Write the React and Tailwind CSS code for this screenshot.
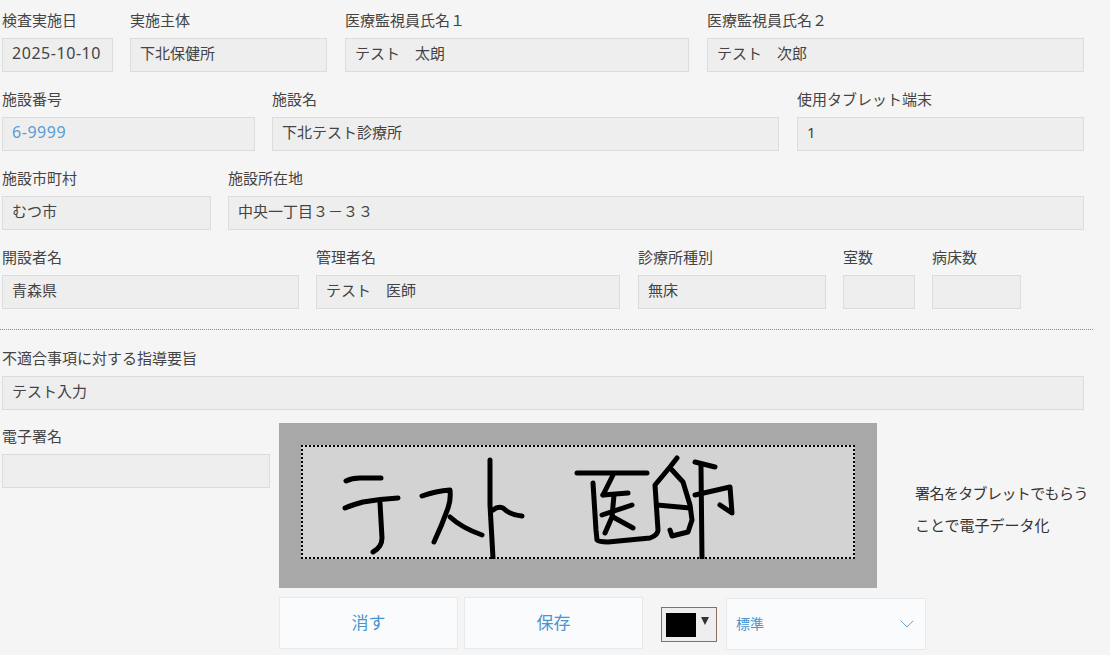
import React from 'react';
import { ChevronDown } from 'lucide-react';

const Field = ({ label, value, className = '', valueClass = 'text-[#444] text-[15px]' }) => (
    <div className={`shrink-0 ${className}`}>
        <div className="h-5 mb-[7px] text-[15px] leading-[18px] text-[#444]">{label}</div>
        <div className={`h-[34px] px-[9px] border border-[#dcdcdc] bg-[#eeeeee] leading-[28px] whitespace-nowrap ${valueClass}`}>
            {value}
        </div>
    </div>
);

// handwritten signature strokes, in page coordinates
const strokes = [
    'M346 481 Q352 478 360 478 L381 478',
    'M345 508 Q352 505 363 502 Q380 499 398 498',
    'M380 503 L382 538 Q382 547 373 552',
    'M422 496 Q436 491 450 490 Q451 500 448 508 Q442 525 434 542',
    'M450 517 Q462 528 482 535',
    'M490 460 L490 505 L493 558',
    'M493 510 Q498 506 503 508 Q510 515 522 516',
    'M577 473 L647 473',
    'M593 483 L596 530 L597 540 Q598 542 608 542 L650 538 Q658 535 658 530 L657 515 L655 485 L670 467 L677 458',
    'M613 475 L603 495',
    'M603 495 L628 493',
    'M602 515 L632 505',
    'M614 495 L612 517 L605 533',
    'M613 517 L633 528',
    'M657 505 L690 508',
    'M672 470 L683 482 L690 505 L692 520 L688 532 L672 536 L670 530',
    'M695 462 L715 467',
    'M701 466 L702 558',
    'M695 495 L730 487 L732 513 L720 505',
];

const App = () => {
    return (
        <div className="w-[1110px] h-[655px] overflow-hidden bg-[#f5f5f5] pl-[2px] pt-[11px] font-['Noto_Sans','Noto_Sans_CJK_JP',sans-serif]">
            <div className="flex gap-[17px] mb-[18px]">
                <Field className="w-[111px]" label="検査実施日" value="2025-10-10" valueClass="text-[#444] text-[16px] tracking-[0.55px]" />
                <Field className="w-[197px]" label="実施主体" value="下北保健所" />
                <Field className="w-[344px] ml-px" label="医療監視員氏名１" value="テスト　太朗" />
                <Field className="w-[377px] ml-px" label="医療監視員氏名２" value="テスト　次郎" />
            </div>
            <div className="flex gap-[17px] mb-[18px]">
                <Field className="w-[253px]" label="施設番号" value="6-9999" valueClass="text-[#5b9bd5] text-[16px] tracking-[0.55px]" />
                <Field className="w-[507px]" label="施設名" value="下北テスト診療所" />
                <Field className="w-[287px] ml-px" label="使用タブレット端末" value="1" />
            </div>
            <div className="flex gap-[17px] mb-[18px]">
                <Field className="w-[209px]" label="施設市町村" value="むつ市" />
                <Field className="w-[856px]" label="施設所在地" value="中央一丁目３－３３" />
            </div>
            <div className="flex gap-[17px]">
                <Field className="w-[297px]" label="開設者名" value="青森県" />
                <Field className="w-[304px]" label="管理者名" value="テスト　医師" />
                <Field className="w-[188px] ml-px" label="診療所種別" value="無床" />
                <Field className="w-[72px]" label="室数" value="" />
                <Field className="w-[89px]" label="病床数" value="" />
            </div>

            <div className="w-[1093px] -ml-[2px] mt-5 mb-[19px] border-t border-dotted border-[#888]" />

            <Field className="w-[1082px]" label="不適合事項に対する指導要旨" value="テスト入力" />

            <div className="flex mt-[13px]">
                <div className="w-[277px] pt-1 shrink-0">
                    <Field className="w-[268px]" label="電子署名" value="" />
                </div>
                <div className="w-[598px] shrink-0">
                    <div className="h-[165px] bg-[#a8a8a8] p-[22px]">
                        <div className="h-[114px] bg-[#d3d3d3] outline-2 outline-dotted -outline-offset-2 outline-black">
                            <svg viewBox="301 445 554 114" className="block w-full h-full" fill="none" stroke="#000" strokeWidth="5" strokeLinecap="round" strokeLinejoin="round">
                                {strokes.map((d) => (
                                    <path key={d} d={d} />
                                ))}
                            </svg>
                        </div>
                    </div>
                    <div className="flex items-start mt-[9px]">
                        <button className="w-[179px] h-[52px] shrink-0 border border-[#e6e8ea] bg-[#f9fbfc] text-[17px] text-[#4a94d0]">消す</button>
                        <button className="w-[179px] h-[52px] shrink-0 ml-[6px] border border-[#e6e8ea] bg-[#f9fbfc] text-[17px] text-[#4a94d0]">保存</button>
                        <div className="w-[56px] h-[35px] shrink-0 ml-[18px] mt-[10px] flex items-center pl-1 border border-[#8d6e5c] bg-[#eeeeee]">
                            <div className="w-[30px] h-6 bg-black" />
                            <svg viewBox="0 0 8 8" className="w-2 h-2 ml-[5px] -mt-2" fill="#333">
                                <path d="M0 0 H8 L4 8 Z" />
                            </svg>
                        </div>
                        <div className="w-[200px] h-[52px] shrink-0 ml-[9px] mt-px flex items-center justify-between pl-[9px] pr-[6px] border border-[#e6e8ea] bg-[#f9fbfc] text-[14px] text-[#4a94d0]">
                            <span className="-mt-[2px]">標準</span>
                            <ChevronDown size={24} strokeWidth={1} color="#6aa6d8" />
                        </div>
                    </div>
                </div>
                <div className="ml-[38px] mt-[54px] w-[190px] shrink-0 text-[15px] leading-8 text-[#333]">
                    <div className="whitespace-nowrap tracking-[-0.6px]">署名をタブレットでもらう</div>
                    <div className="whitespace-nowrap">ことで電子データ化</div>
                </div>
            </div>
        </div>
    );
};

export default App;
